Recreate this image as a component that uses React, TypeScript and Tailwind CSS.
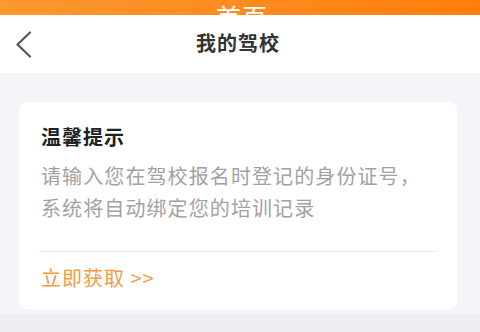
const font = { fontFamily: '"Noto Sans CJK SC", "Noto Sans", sans-serif' };

export default function App() {
  return (
    <div className="w-[480px] h-[332px] overflow-hidden bg-[#f4f5f8] flex flex-col" style={font}>
      {/* top orange strip with clipped tab title */}
      <div className="h-[15px] bg-gradient-to-r from-[#fd982c] to-[#ff7e0a] flex justify-center overflow-hidden">
        <span className="text-white text-[25px] leading-none mt-[4px] pl-[4px] tracking-[1px]">首页</span>
      </div>

      {/* header */}
      <div className="h-[58px] bg-white flex items-center relative">
        <div className="pl-[15px] flex items-center">
          <svg width="17" height="27" viewBox="0 0 17 27" fill="none">
            <polyline points="15,1.5 2.5,13.5 15,25.5" stroke="#555" strokeWidth="2.2" strokeLinecap="round" strokeLinejoin="round" />
          </svg>
        </div>
        <div className="absolute inset-0 flex items-center justify-center">
          <span className="text-[20px] tracking-[1px] font-semibold text-[#333] mr-[4px] mt-[-2px]">我的驾校</span>
        </div>
      </div>

      {/* content */}
      <div className="flex-1 px-[19px] pt-[29px]">
        <div className="w-[438px] h-[207px] bg-white rounded-[8px] px-[22px] flex flex-col">
          <div className="pt-[22px] text-[20px] tracking-[1px] font-bold text-[#222] leading-[26px]">温馨提示</div>
          <div className="mt-[10px] text-[20px] tracking-[1.1px] text-[#a2a2a2] leading-[32px]">
            请输入您在驾校报名时登记的身份证号，
            <br />
            系统将自动绑定您的培训记录
          </div>
          <div className="mt-[27px] h-px bg-[#ececec] mr-[-2px] ml-[-2px]" />
          <div className="mt-[13px] text-[20px] tracking-[1px] text-[#f29b45] leading-[26px]">立即获取 &gt;&gt;</div>
        </div>
      </div>
      <div className="h-[18px] bg-[#eeeff3]" />
    </div>
  );
}
